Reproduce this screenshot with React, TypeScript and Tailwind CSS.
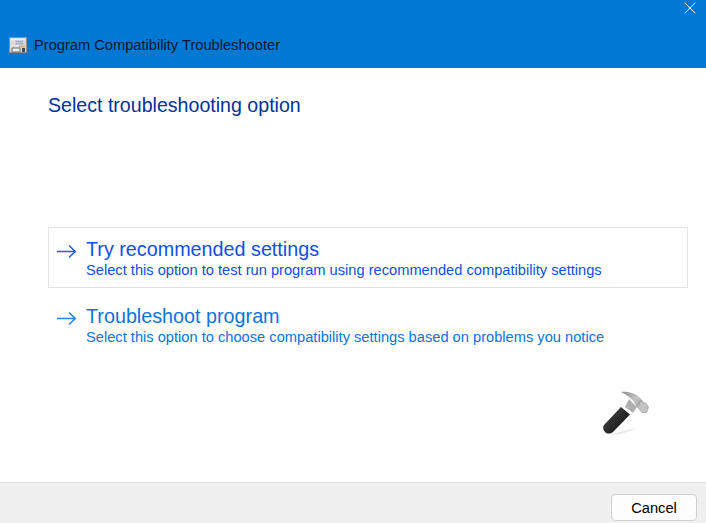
import { X } from 'lucide-react'

function AppIcon() {
  return (
    <svg width="18" height="18" viewBox="0 0 18 18" className="shrink-0">
      <rect x="0.5" y="1.5" width="17" height="15" fill="#d5d8de" stroke="#8a8f96" />
      <rect x="1.5" y="2.5" width="15" height="2" fill="#eceef1" />
      <path d="M6 4h9v5H6z" fill="#c9cfe6" />
      <path d="M7 5.500h7M7 7.500h7" stroke="#9aa6cb" />
      <path d="M2 9h12v2H2z" fill="#e4e4e4" />
      <path d="M10 9h6v3h-6z" fill="#d3c08a" />
      <path d="M3 12h8v4H3z" fill="#ececec" stroke="#6a6e73" />
      <path d="M13 12h3v4h-3z" fill="#44484c" />
    </svg>
  )
}

function Hammer() {
  return (
    <svg width="48" height="46" viewBox="0 0 48 46">
      <defs>
        <linearGradient id="head" x1="0" y1="0" x2="1" y2="1">
          <stop offset="0" stopColor="#8a8a8a" />
          <stop offset="0.55" stopColor="#c4c4c4" />
          <stop offset="1" stopColor="#9a9a9a" />
        </linearGradient>
        <linearGradient id="grip" x1="0" y1="0" x2="1" y2="1">
          <stop offset="0" stopColor="#4a4a4a" />
          <stop offset="1" stopColor="#0c0c0c" />
        </linearGradient>
      </defs>
      <path d="M7 45L34 38C26 42 18 45 7 45z" fill="#cfcfcf" opacity="0.55" />
      <path d="M19 2C27 0.500 36 4 41 11L35 18C33 11 27 6 19 2z" fill="url(#head)" />
      <path d="M38 11l6 2.500 2.500 3.500-2 5.500-4.500 0-4-5z" fill="#c4c4c4" stroke="#8c8c8c" strokeWidth="0.6" />
      <path d="M27 9l8 8-4 6-8-6z" fill="#b0b0b0" />
      <path d="M19 17l9 7.500L11 42c-2.500 2-6 2-8 0S0.500 37 2 35z" fill="url(#grip)" />
    </svg>
  )
}

function Arrow() {
  return (
    <svg width="20" height="16" viewBox="0 0 20 16" className="shrink-0" fill="none" stroke="currentColor" strokeWidth="1.5">
      <path d="M0 8.500h18M12 2.500l6.300 6L12 14.500" />
    </svg>
  )
}

function Option({ title, desc, boxed, color, titleColor }: { title: string; desc: string; boxed?: boolean; color: string; titleColor: string }) {
  return (
    <div className={`flex h-[61px] items-center border pl-[8px] ${boxed ? 'border-[#e3e3e3]' : 'border-transparent'}`}>
      <div className={`mb-[14px] mr-[9px] ${color}`}>
        <Arrow />
      </div>
      <div className="mt-[1px]">
        <div className={`text-[19.750px] leading-[22px] ${titleColor}`}>{title}</div>
        <div className={`mt-[1px] text-[14.670px] leading-[18px] ${titleColor}`}>{desc}</div>
      </div>
    </div>
  )
}

export default function App() {
  return (
    <div className="flex h-[523px] w-[706px] flex-col overflow-hidden bg-white font-['Liberation_Sans',Arial,sans-serif]">
      <header className="h-[68px] shrink-0 bg-[#0078d4]">
        <div className="flex justify-end pr-[6px] text-white">
          <X size={20} strokeWidth={1.1} className="-mt-[2px]" />
        </div>
        <div className="mt-[18px] flex items-center gap-[7px] pl-[9px]">
          <AppIcon />
          <span className="text-[14.670px] leading-[18px] text-[#06182b]">Program Compatibility Troubleshooter</span>
        </div>
      </header>
      <main className="flex-1 pl-[48px] pr-[18px]">
        <h1 className="mt-[25px] text-[19.600px] leading-[24px] text-[#003399]">Select troubleshooting option</h1>
        <div className="mt-[110px]">
          <Option
            boxed
            title="Try recommended settings"
            desc="Select this option to test run program using recommended compatibility settings"
            color="text-[#1f5fe0]"
            titleColor="text-[#0f4fe6]"
          />
          <div className="mt-[6px]">
            <Option
              title="Troubleshoot program"
              desc="Select this option to choose compatibility settings based on problems you notice"
              color="text-[#1a86e8]"
              titleColor="text-[#0a74dc]"
            />
          </div>
        </div>
        <div className="mt-[35px] flex justify-end pr-[38px]">
          <Hammer />
        </div>
      </main>
      <footer className="flex h-[41px] shrink-0 items-start justify-end border-t border-[#dfdfdf] bg-[#f0f0f0] pr-[9px] pt-[11px]">
        <button className="h-[27px] w-[86px] rounded-[4px] border border-[#d0d0d0] bg-[#fdfdfd] text-[14.670px] leading-[24px] text-black">
          Cancel
        </button>
      </footer>
    </div>
  )
}
